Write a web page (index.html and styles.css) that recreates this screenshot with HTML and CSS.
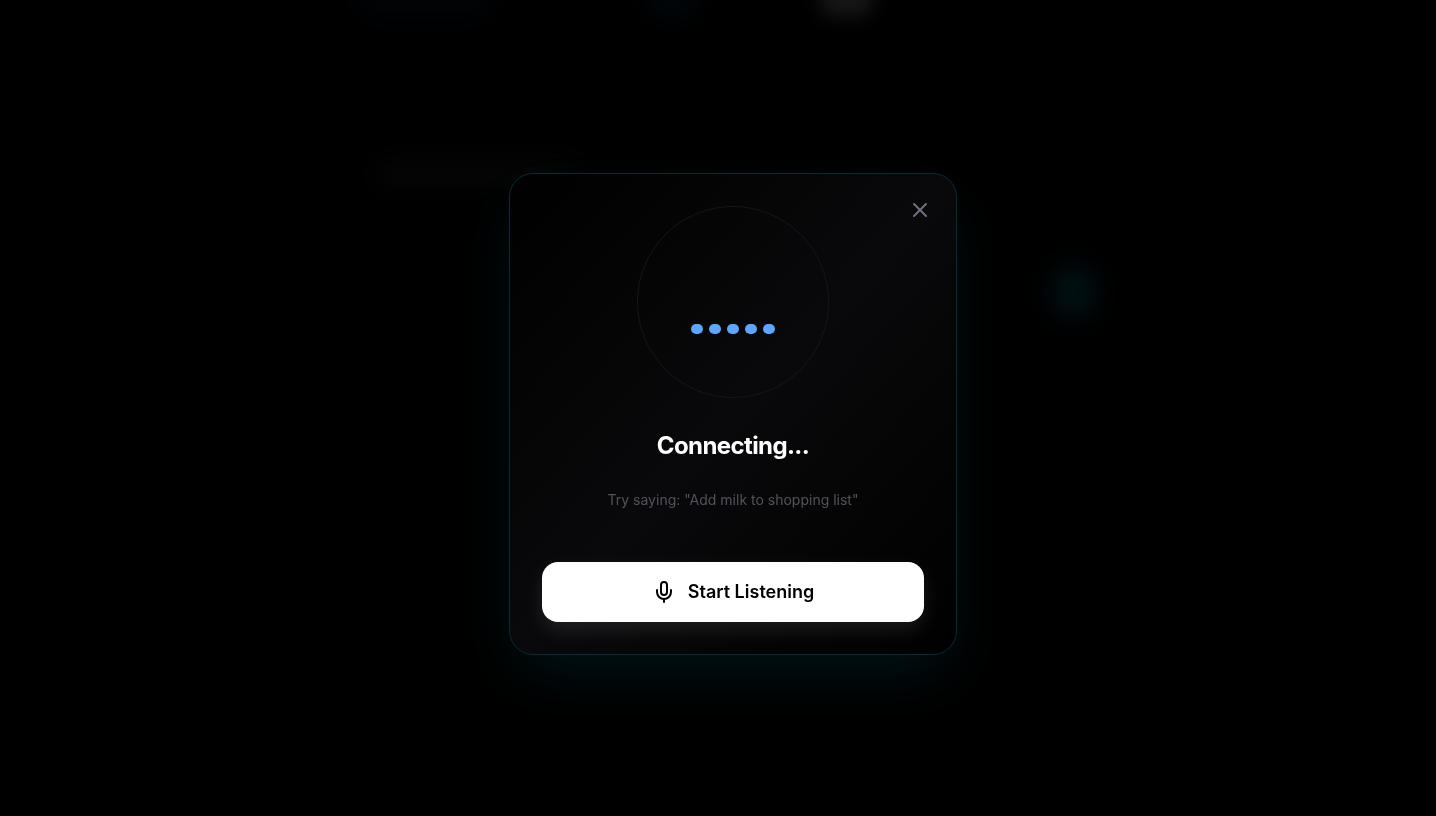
FILE: index.html
```html
<!DOCTYPE html>
<html lang="en">
<head>
<meta charset="utf-8">
<meta name="viewport" content="width=device-width, initial-scale=1">
<title>Voice assistant</title>
<link rel="stylesheet" href="styles.css">
</head>
<body>
<div class="backdrop" aria-hidden="true">
  <span class="glow glow-logo"></span>
  <span class="glow glow-nav"></span>
  <span class="glow glow-tab"></span>
  <span class="glow glow-title"></span>
  <span class="glow glow-action"></span>
</div>
<main class="overlay">
  <section class="modal" role="dialog" aria-modal="true" aria-labelledby="status">
    <button class="close" type="button" aria-label="Close">
      <svg class="icon" viewBox="0 0 24 24" aria-hidden="true"><path d="M18 6 6 18"/><path d="m6 6 12 12"/></svg>
    </button>
    <div class="orb">
      <div class="bars">
        <span class="bar"></span>
        <span class="bar"></span>
        <span class="bar"></span>
        <span class="bar"></span>
        <span class="bar"></span>
      </div>
    </div>
    <h1 class="status" id="status">Connecting...</h1>
    <p class="hint">Try saying: "Add milk to shopping list"</p>
    <button class="start" type="button">
      <svg class="icon" viewBox="0 0 24 24" aria-hidden="true"><path d="M12 2a3 3 0 0 0-3 3v7a3 3 0 0 0 6 0V5a3 3 0 0 0-3-3Z"/><path d="M19 10v2a7 7 0 0 1-14 0v-2"/><path d="M12 19v3"/></svg>
      <span>Start Listening</span>
    </button>
  </section>
</main>
</body>
</html>
```
FILE: styles.css
```css
*, *::before, *::after { box-sizing: border-box; }

body {
  margin: 0;
  background: #000;
  color: #fff;
  font-family: Inter, "Liberation Sans", sans-serif;
}

/* Dimmed, blurred page behind the dialog */
.backdrop {
  position: fixed;
  inset: 0;
  overflow: hidden;
}

.glow {
  position: absolute;
  border-radius: 12px;
  filter: blur(12px);
}

.glow-logo { left: 360px; top: -20px; width: 130px; height: 36px; background: #010406; }
.glow-nav { left: 650px; top: -20px; width: 46px; height: 34px; background: #01070b; }
.glow-tab { left: 820px; top: -24px; width: 52px; height: 40px; background: #161616; filter: blur(9px); }
.glow-title { left: 376px; top: 162px; width: 208px; height: 24px; background: #060606; }
.glow-action { left: 1054px; top: 268px; width: 40px; height: 48px; background: #011114; }

.overlay {
  position: relative;
  display: flex;
  align-items: center;
  justify-content: center;
  min-height: 100vh;
  padding: 12px 0 0 30px;
}

.modal {
  position: relative;
  display: flex;
  flex-direction: column;
  align-items: center;
  width: 100%;
  max-width: 448px;
  padding: 32px;
  border: 1px solid #082a33;
  border-radius: 24px;
  background: linear-gradient(to bottom right, #000, #09090b, #000);
  box-shadow: 0 24px 60px -12px rgba(6, 182, 212, 0.12);
}

.close {
  position: absolute;
  top: 16px;
  right: 16px;
  display: flex;
  padding: 8px;
  border: 0;
  border-radius: 20px;
  background: none;
  color: #71717a;
  cursor: pointer;
}

.icon {
  width: 24px;
  height: 24px;
  fill: none;
  stroke: currentColor;
  stroke-width: 2;
  stroke-linecap: round;
  stroke-linejoin: round;
}

.orb {
  display: flex;
  align-items: center;
  justify-content: center;
  width: 192px;
  height: 192px;
  border: 1px solid #161618;
  border-radius: 50%;
}

.bars {
  display: flex;
  align-items: flex-end;
  gap: 6px;
  height: 64px;
}

.bar {
  width: 12px;
  height: 10px;
  border-radius: 6px;
  background: #60a5fa;
}

.status {
  margin: 32px 0 0;
  font-size: 24px;
  font-weight: 700;
  line-height: 32px;
  letter-spacing: -0.025em;
}

.hint {
  margin: 28px 0 52px;
  color: #52525b;
  font-size: 14px;
  line-height: 20px;
}

.start {
  display: flex;
  align-items: center;
  justify-content: center;
  gap: 12px;
  width: 100%;
  padding: 16px;
  border: 0;
  border-radius: 16px;
  background: #fff;
  color: #000;
  font-family: inherit;
  font-size: 18px;
  font-weight: 600;
  line-height: 28px;
  box-shadow: 0 8px 20px rgba(255, 255, 255, 0.1);
  cursor: pointer;
}
```
